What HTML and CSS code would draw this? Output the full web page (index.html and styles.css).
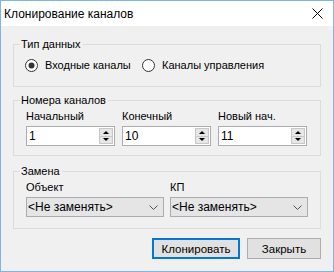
FILE: index.html
```html
<!DOCTYPE html>
<html lang="ru">
<head>
<meta charset="utf-8">
<link rel="stylesheet" href="styles.css">
</head>
<body>
<div class="window">
  <div class="titlebar">
    <span class="title">Клонирование каналов</span>
    <svg class="close" width="11" height="11" viewBox="0 0 11 11"><path d="M0.5 0.5 L10.5 10.5 M10.5 0.5 L0.5 10.5" stroke="#000" stroke-width="1" fill="none"/></svg>
  </div>
  <div class="client">
    <div class="group g1">
      <span class="legend">Тип данных</span>
      <div class="radios">
        <label class="radio">
          <svg width="13" height="13" viewBox="0 0 13 13"><circle cx="6.5" cy="6.5" r="6" fill="#fff" stroke="#333"/><circle cx="6.5" cy="6.5" r="3" fill="#333"/></svg>
          <span>Входные каналы</span>
        </label>
        <label class="radio">
          <svg width="13" height="13" viewBox="0 0 13 13"><circle cx="6.5" cy="6.5" r="6" fill="#fff" stroke="#333"/></svg>
          <span>Каналы управления</span>
        </label>
      </div>
    </div>

    <div class="group g2">
      <span class="legend">Номера каналов</span>
      <div class="fields">
        <div class="field">
          <span class="lbl">Начальный</span>
          <div class="spin"><span class="val">1</span><div class="spinbtns"><div class="sb"><i class="up"></i></div><div class="sb"><i class="down"></i></div></div></div>
        </div>
        <div class="field">
          <span class="lbl">Конечный</span>
          <div class="spin"><span class="val">10</span><div class="spinbtns"><div class="sb"><i class="up"></i></div><div class="sb"><i class="down"></i></div></div></div>
        </div>
        <div class="field">
          <span class="lbl">Новый нач.</span>
          <div class="spin"><span class="val">11</span><div class="spinbtns"><div class="sb"><i class="up"></i></div><div class="sb"><i class="down"></i></div></div></div>
        </div>
      </div>
    </div>

    <div class="group g3">
      <span class="legend">Замена</span>
      <div class="combos">
        <div class="field">
          <span class="lbl">Объект</span>
          <div class="combo"><span>&lt;Не заменять&gt;</span><svg width="9" height="5" viewBox="0 0 9 5"><path d="M0.5 0.5 L4.5 4.5 L8.5 0.5" stroke="#555" fill="none"/></svg></div>
        </div>
        <div class="field">
          <span class="lbl">КП</span>
          <div class="combo"><span>&lt;Не заменять&gt;</span><svg width="9" height="5" viewBox="0 0 9 5"><path d="M0.5 0.5 L4.5 4.5 L8.5 0.5" stroke="#555" fill="none"/></svg></div>
        </div>
      </div>
    </div>

    <div class="buttons">
      <div class="btn default">Клонировать</div>
      <div class="btn close-btn">Закрыть</div>
    </div>
  </div>
</div>
</body>
</html>
```

FILE: styles.css
```css
* { box-sizing: border-box; }
html, body { margin: 0; padding: 0; }
body {
  font-family: "Liberation Sans", Arial, sans-serif;
  font-size: 11px;
  color: #000;
  background: #f0f0f0;
}
.window {
  width: 334px;
  height: 272px;
  border: 1px solid #7ab6ec;
  background: #f0f0f0;
  display: flex;
  flex-direction: column;
}
.titlebar {
  height: 25px;
  background: #fff;
  display: flex;
  align-items: center;
  justify-content: space-between;
  padding: 0 10px 0 3px;
}
.title {
  font-size: 12px;
  line-height: 14px;
}
.close { display: block; }
.client {
  padding-left: 12px;
  display: flex;
  flex-direction: column;
}
.group {
  width: 308px;
  border: 1px solid #dcdcdc;
  display: flex;
  flex-direction: column;
}
.legend {
  display: block;
  align-self: flex-start;
  line-height: 13px;
  margin-top: -7px;
  margin-left: 6px;
  padding: 0 2px 0 1px;
  background: #f0f0f0;
}
.g1 { margin-top: 18px; height: 43px; }
.g2 { margin-top: 13px; height: 56px; }
.g3 { margin-top: 15px; height: 58px; }

.radios {
  display: grid;
  grid-template-columns: 117px auto;
  margin-top: 7px;
  margin-left: 11px;
  height: 14px;
}
.radio {
  display: flex;
  align-items: center;
  gap: 7px;
  line-height: 13px;
}
.radio svg { display: block; }

.fields {
  display: flex;
  gap: 7px;
  margin-left: 12px;
  margin-top: 3px;
}
.field {
  display: flex;
  flex-direction: column;
}
.lbl {
  line-height: 13px;
  height: 13px;
}
.spin {
  margin-top: 3px;
  width: 89px;
  height: 20px;
  background: #fff;
  border: 1px solid #acacac;
  display: flex;
  align-items: stretch;
  justify-content: space-between;
}
.val {
  padding-left: 2px;
  line-height: 18px;
  font-size: 12px;
}
.spinbtns {
  width: 14px;
  margin: 1px 1px 1px 0;
  display: flex;
  flex-direction: column;
}
.sb {
  flex: 1;
  background: #e6e6e6;
  border: 1px solid #c8c8c8;
  display: flex;
  align-items: center;
  justify-content: center;
}
.sb + .sb { border-top: none; }
.up, .down {
  display: block;
  width: 0;
  height: 0;
  border-left: 3px solid transparent;
  border-right: 3px solid transparent;
}
.up { border-bottom: 3px solid #000; }
.down { border-top: 3px solid #000; }

.combos {
  display: flex;
  gap: 6px;
  margin-left: 12px;
  margin-top: 3px;
}
.combo {
  margin-top: 3px;
  width: 138px;
  height: 20px;
  background: #e5e5e5;
  border: 1px solid #acacac;
  display: flex;
  align-items: center;
  justify-content: space-between;
  padding: 0 5px 0 1px;
  font-size: 12px;
}
.combo svg { display: block; }

.buttons {
  width: 308px;
  display: flex;
  justify-content: flex-end;
  gap: 7px;
  margin-top: 9px;
}
.btn {
  height: 21px;
  background: #e1e1e1;
  border: 1px solid #adadad;
  display: flex;
  align-items: center;
  justify-content: center;
  font-size: 11.5px;
}
.btn.default {
  width: 88px;
  border: 2px solid #0078d7;
}
.close-btn { width: 74px; }
```
